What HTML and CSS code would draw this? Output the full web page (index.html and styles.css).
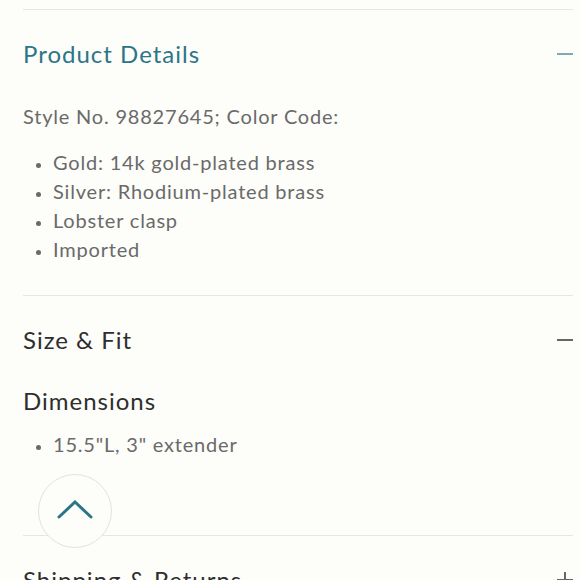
FILE: index.html
```html
<!DOCTYPE html>
<html>
<head>
<meta charset="utf-8">
<link rel="stylesheet" href="styles.css">
</head>
<body>
<div class="page">
  <section class="section">
    <div class="head">
      <h2 class="title title-active">Product Details</h2>
      <span class="icon minus minus-active"></span>
    </div>
    <div class="body">
      <p class="text">Style No. 98827645; Color Code:</p>
      <ul class="list list-details">
        <li>Gold: 14k gold-plated brass</li>
        <li>Silver: Rhodium-plated brass</li>
        <li>Lobster clasp</li>
        <li>Imported</li>
      </ul>
    </div>
  </section>
  <section class="section">
    <div class="head">
      <h2 class="title">Size &amp; Fit</h2>
      <span class="icon minus"></span>
    </div>
    <div class="body body-fit">
      <h3 class="sub">Dimensions</h3>
      <ul class="list list-dims">
        <li>15.5"L, 3" extender</li>
      </ul>
    </div>
  </section>
  <section class="section">
    <div class="head">
      <h2 class="title">Shipping &amp; Returns</h2>
      <span class="icon plus"></span>
    </div>
  </section>
  <button class="to-top" aria-label="Back to top">
    <svg width="36" height="20" viewBox="0 0 36 20"><path d="M2 17 L18 2 L34 17" fill="none" stroke="#2b7588" stroke-width="3" stroke-linecap="round" stroke-linejoin="miter"/></svg>
  </button>
</div>
</body>
</html>
```
FILE: styles.css
```css
* { box-sizing: border-box; }
html, body { margin: 0; padding: 0; }
body {
  background: #fdfdf9;
  font-family: Lato, "Noto Sans", sans-serif;
  overflow: hidden;
  height: 580px;
}
.page {
  position: relative;
  padding: 9px 7px 0 23px;
}
.section {
  border-top: 1px solid #e6e6e2;
}
.head {
  height: 88px;
  padding-bottom: 2px;
  display: flex;
  align-items: center;
  justify-content: space-between;
}
.title {
  margin: 0;
  font-size: 24px;
  font-weight: 400;
  color: #2e2e2e;
  letter-spacing: 1px;
}
.title-active { color: #2b7588; }
.icon {
  width: 16px;
  height: 16px;
  position: relative;
  top: 1px;
}
.minus::before, .plus::before, .plus::after {
  content: "";
  position: absolute;
  background: #666;
}
.minus::before, .plus::before {
  left: 0; right: 0; top: 7px; height: 2px;
}
.plus::after {
  top: 0; bottom: 0; left: 7px; width: 2px;
}
.minus-active::before { background: #7fa9b4; }
.body {
  padding: 4px 0 31px;
}
.text {
  margin: 0;
  font-size: 20px;
  line-height: 29px;
  color: #6a6a6a;
  letter-spacing: 0.8px;
}
.list {
  margin: 17px 0 0;
  padding: 0 0 0 30px;
  font-size: 20px;
  line-height: 29px;
  color: #6a6a6a;
  letter-spacing: 0.8px;
}
.list li::marker { font-size: 16px; }
.body-fit { padding: 1px 0 76px; }
.sub {
  margin: 0;
  font-size: 24px;
  line-height: 32px;
  font-weight: 400;
  color: #2e2e2e;
  letter-spacing: 1px;
}
.list-dims { margin-top: 13px; }
.to-top {
  position: absolute;
  left: 38px;
  top: 474px;
  width: 74px;
  height: 74px;
  border-radius: 50%;
  border: 1.5px solid #e2e2de;
  background: #fdfdf9;
  padding: 0;
  display: flex;
  align-items: center;
  justify-content: center;
}
.to-top svg { margin-top: -3px; }
```
